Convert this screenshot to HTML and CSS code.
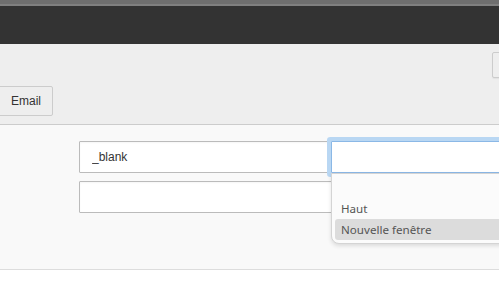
FILE: index.html
```html
<!DOCTYPE html>
<html lang="fr">
<head>
    <meta charset="UTF-8">
    <title>Lien</title>
    <link rel="stylesheet" href="styles.css">
</head>
<body>
    <div class="page">
        <div class="topbar"></div>
        <div class="toolbar">
            <div class="toolbar-top">
                <button class="btn btn-right"></button>
            </div>
            <div class="toolbar-bottom">
                <button class="btn btn-email">Email</button>
            </div>
        </div>
        <div class="panel">
            <div class="row">
                <input class="field field-target" type="text" value="_blank">
                <div class="combo">
                    <input class="field field-focus" type="text">
                    <ul class="dropdown">
                        <li></li>
                        <li>Haut</li>
                        <li class="active">Nouvelle fenêtre</li>
                    </ul>
                </div>
            </div>
            <div class="row">
                <input class="field field-wide" type="text">
            </div>
        </div>
    </div>
</body>
</html>
```

FILE: styles.css
```css
body {
    margin: 0;
    padding: 0;
    background: #fff;
    font-family: "Liberation Sans", Arial, sans-serif;
    overflow: hidden;
}

.page {
    width: 100%;
    height: 100vh;
    overflow: hidden;
}

.topbar {
    height: 40px;
    background: #333;
    border-top: 4px solid #6f6f6f;
    box-shadow: inset 0 2px 0 #808080;
}

.toolbar {
    height: 80px;
    background: #eee;
    border-bottom: 1px solid #ccc;
    overflow: hidden;
}

.toolbar-top {
    padding-top: 8px;
    height: 26px;
    display: flex;
    justify-content: flex-end;
}

.toolbar-bottom {
    margin-top: 8px;
    display: flex;
}

.btn {
    font-family: "Liberation Sans", Arial, sans-serif;
    font-size: 12px;
    color: #333;
    background: #eee;
    border: 1px solid #ccc;
    border-radius: 2px;
    padding: 0;
    margin: 0;
}

.btn-right {
    flex-shrink: 0;
    width: 20px;
    height: 26px;
    margin-right: -13px;
    box-shadow: 0 1px 1px rgba(0, 0, 0, 0.05);
}

.btn-email {
    height: 30px;
    margin-left: -3px;
    padding: 0 11px 0 13px;
}

.panel {
    height: 128px;
    padding-top: 16px;
    background: #f9f9f9;
    border-bottom: 1px solid #ddd;
    overflow: hidden;
}

.row {
    display: flex;
    padding-left: 79px;
    margin-bottom: 8px;
}

.field {
    flex-shrink: 0;
    box-sizing: border-box;
    height: 32px;
    margin: 0;
    padding: 0 12px;
    font-family: "Liberation Sans", Arial, sans-serif;
    font-size: 12px;
    color: #333;
    background: #fff;
    border: 1px solid #bbb;
    border-radius: 1px;
    box-shadow: inset 0 1px 2px rgba(0, 0, 0, 0.04);
    outline: none;
}

.field-target {
    width: 253px;
}

.field-wide {
    width: 420px;
}

.combo {
    position: relative;
    flex-shrink: 0;
    margin-left: -1px;
}

.field-focus {
    width: 200px;
    border-color: #8bb8e6;
    box-shadow: 0 0 0 4px #b9d7f3;
}

.dropdown {
    position: absolute;
    top: 32px;
    left: 0;
    width: 200px;
    margin: 0;
    padding: 3px 0 3px 3px;
    list-style: none;
    background: #fbfbfb;
    border: 1px solid #d4d4d4;
    border-radius: 0 0 0 8px;
    box-shadow: 0 2px 4px rgba(0, 0, 0, 0.12);
    font-family: "Noto Sans", "Open Sans", sans-serif;
    font-size: 11.6px;
    color: #555;
}

.dropdown li {
    height: 21px;
    line-height: 21px;
    padding-left: 6px;
    border-radius: 3px 0 0 3px;
}

.dropdown li.active {
    background: #dcdcdc;
}
```
